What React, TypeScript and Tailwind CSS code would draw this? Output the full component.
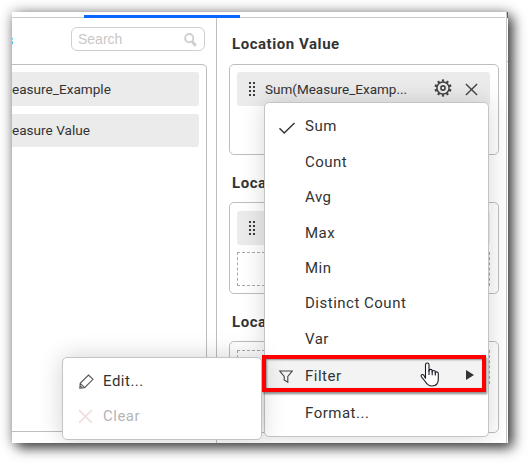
import type { ReactNode } from 'react';

function Grip() {
  return (
    <svg className="h-[15px] w-2 shrink-0" viewBox="0 0 8 15" fill="#3c3c3c" shapeRendering="crispEdges">
      {[1, 5].map((x) =>
        [0, 4, 8, 12].map((y) => <rect key={`${x}-${y}`} x={x} y={y} width="2" height="2" />),
      )}
    </svg>
  );
}

function Gear() {
  const teeth = [0, 36, 72, 108, 144, 180, 216, 252, 288, 324];
  return (
    <svg className="-mt-[2px] h-[18px] w-[18px] shrink-0" viewBox="0 0 18 18" fill="none" stroke="#444">
      <circle cx="9" cy="9" r="6.1" strokeWidth="1.5" />
      <circle cx="9" cy="9" r="2.1" strokeWidth="1.6" />
      {teeth.map((a) => (
        <path key={a} d="M9 .4V2.8" strokeWidth="2.2" transform={`rotate(${a} 9 9)`} />
      ))}
    </svg>
  );
}

function Cross({ className }: { className: string }) {
  return (
    <svg className={className} viewBox="0 0 14 14" fill="none" stroke="currentColor" strokeWidth="1.5">
      <path d="M1 1L13 13M13 1L1 13" />
    </svg>
  );
}

function Check() {
  return (
    <svg className="mt-[2px] ml-px h-3 w-4" viewBox="0 0 16 12" fill="none" stroke="#333" strokeWidth="1.4">
      <path d="M.5 6.2L5.2 11L15.5 1" />
    </svg>
  );
}

function Funnel() {
  return (
    <svg className="ml-px h-[13px] w-[14px]" viewBox="0 0 14 13" fill="none" stroke="#444" strokeWidth="1.1">
      <path d="M.8 1H13.2L8.8 6.4V12.2L5.2 10V6.4Z" />
    </svg>
  );
}

function Pencil() {
  return (
    <svg className="h-[15px] w-[15px]" viewBox="0 0 15 15" fill="none" stroke="#555" strokeWidth="1.1">
      <path d="M.8 14.2L1.2 9.3L9.5 1L14 5.3L5.6 13.7ZM1.2 9.3L5.6 13.7M1 11.7L3.2 14" />
    </svg>
  );
}

function DropZone({ children, className }: { children?: ReactNode; className: string }) {
  return <div className={`flex w-[270px] flex-col gap-[7px] rounded-[5px] border border-[#bdbdbd] pr-2 pl-[7px] ${className}`}>{children}</div>;
}

function MenuRow({ label, icon, className = 'h-[35.4px]' }: { label: string; icon?: ReactNode; className?: string }) {
  return (
    <div className={`flex items-center text-[15px] tracking-[0.5px] ${className}`}>
      <div className="flex w-10 shrink-0 items-center pl-[13px]">{icon}</div>
      {label}
    </div>
  );
}

function Heading({ children }: { children: ReactNode }) {
  return <h2 className="pl-[3px] text-[15px] leading-[18px] font-bold tracking-[0.55px]">{children}</h2>;
}

export default function App() {
  return (
    <div className="h-[463px] w-[528px] overflow-hidden bg-white pt-3 pl-3 font-['Roboto',sans-serif] text-[#333]">
      <div className="relative h-[431px] w-[496px] bg-white shadow-[5px_5px_12px_0px_rgba(0,0,0,0.7),0_0_12px_rgba(0,0,0,0.3)]">
        <div className="flex h-full w-full flex-col overflow-hidden">
          <div className="flex h-[6px] shrink-0 items-end">
            <div className="h-px w-[72px] bg-[#c8c8c8]" />
            <div className="h-[3px] w-[156px] bg-[#0a66ff]" />
            <div className="h-px w-[265px] bg-[#c8c8c8]" />
            <div className="h-full w-[1px] bg-white" />
            <div className="h-full w-px bg-[#c8c8c8]" />
            <div className="h-full w-px bg-[#0a66ff]" />
          </div>
          <div className="flex min-h-0 flex-1">
            <div className="flex w-[205px] shrink-0 flex-col border-r border-[#bdbdbd]">
              <div className="flex h-[46px] shrink-0 items-center justify-between pt-[10px] pr-[11px] pb-3">
                <div className="h-4 w-px overflow-hidden text-[15px] leading-4 text-[#55b4f5]">
                  <span className="-ml-[6px]">s</span>
                </div>
                <div className="-mt-[2px] flex h-6 w-[134px] items-center justify-between rounded-[6px] border border-[#cfcfcf] pr-[7px] pl-[6px]">
                  <span className="font-['Liberation_Sans',sans-serif] text-[14px] text-[#c8c8c8]">Search</span>
                  <svg className="mt-[2px] h-[14px] w-[13px]" viewBox="0 0 13 14" fill="none" stroke="#d0d0d0">
                    <circle cx="5.2" cy="5.2" r="4.1" strokeWidth="2" />
                    <path d="M8 8.4L11.8 12.8" strokeWidth="3" />
                  </svg>
                </div>
              </div>
              <div className="flex h-[368px] w-[195px] flex-col gap-2 rounded-r-[5px] border-y border-r border-[#bdbdbd] py-[7px] pr-[7px] text-[13.6px]">
                <div className="flex h-[34px] items-center rounded-r-[3px] bg-[#ebebeb]">easure_Example</div>
                <div className="flex h-[33px] items-center rounded-r-[3px] bg-[#ebebeb]">easure Value</div>
              </div>
            </div>
            <div className="w-[289px] shrink-0 pt-[17px] pl-3">
              <Heading>Location Value</Heading>
              <DropZone className="mt-[11px] h-[91px] pt-[7px]">
                <div className="flex h-[34px] shrink-0 items-center rounded-[3px] bg-[#ebebeb] pr-3 pl-[11px] text-[13.5px]">
                  <Grip />
                  <span className="ml-[9px] flex-1">Sum(Measure_Examp...</span>
                  <Gear />
                  <Cross className="ml-[13px] h-[13px] w-[13px] text-[#444]" />
                </div>
              </DropZone>
              <div className="mt-[19px]"><Heading>Location</Heading></div>
              <DropZone className="mt-[10px] h-[92px] pt-2">
                <div className="flex h-[34px] shrink-0 items-center rounded-[3px] bg-[#ebebeb] pl-[11px]"><Grip /></div>
                <div className="h-[34px] shrink-0 border border-dashed border-[#a8a8a8]" />
              </DropZone>
              <div className="mt-[19px]"><Heading>Location</Heading></div>
              <DropZone className="mt-[10px] h-[92px] pt-2">
                <div className="h-[34px] shrink-0 border border-dashed border-[#a8a8a8]" />
              </DropZone>
            </div>
            <div className="w-[2px] border-l border-[#c8c8c8] pt-[43px]">
              <div className="h-px bg-[#bdbdbd]" />
            </div>
          </div>
        </div>

        <div className="absolute inset-0 overflow-hidden">
          <div className="absolute top-[90px] left-[252px] h-[335px] w-[225px] rounded-[5px] border border-[#c4c4c4] bg-white pt-[6px] shadow-[0_0_24px_rgba(0,0,0,0.16)]">
            <MenuRow label="Sum" icon={<Check />} />
            <MenuRow label="Count" />
            <MenuRow label="Avg" />
            <MenuRow label="Max" />
            <MenuRow label="Min" />
            <MenuRow label="Distinct Count" />
            <MenuRow label="Var" />
            <div className="mt-px flex items-center bg-[#f3f3f3]">
              <MenuRow label="Filter" icon={<Funnel />} className="h-[37px] flex-1" />
              <svg className="mr-[14px] mb-[2px] h-[10px] w-2" viewBox="0 0 8 10" fill="#333"><path d="M0 0L8 5L0 10Z" /></svg>
            </div>
            <MenuRow label="Format..." className="h-[37px]" />
          </div>
          <div className="absolute top-[345px] left-[50px] h-[83px] w-[200px] rounded-[5px] border border-[#c4c4c4] bg-white pt-[6px] shadow-[0_0_24px_rgba(0,0,0,0.18)]">
            <MenuRow label="Edit..." icon={<span className="pl-[3px]"><Pencil /></span>} />
            <MenuRow label="Clear" icon={<Cross className="ml-[2px] h-[15px] w-[15px] text-[#f1dddd]" />} className="h-[34px] text-[#b5b5b5]" />
          </div>
          <div className="absolute top-[343px] left-[250px] h-[37px] w-[224px] border-4 border-[#f00] shadow-[1px_2px_2px_rgba(0,0,0,0.4),inset_1px_1px_2px_rgba(0,0,0,0.4)]" />
          <svg className="absolute top-[350px] left-[408px] h-[25px] w-[20px]" viewBox="0 0 20 25" fill="#fff" stroke="#1b1b28" strokeWidth="1.1" strokeLinejoin="round">
            <path d="M5.5 16.3V2.7C5.5.4 9 .4 9 2.7V9C9 6.8 12.2 6.9 12.2 9V10C12.2 8 15.3 8 15.3 10V11C15.3 9.3 18.3 9.5 18.3 11.5V17.3C18.3 21.8 15.7 24 12 24C8.5 24 7 22.6 5.2 19.5L1.5 14.8C.4 13.1 2.5 11.6 3.8 13.2Z" />
            <path d="M9 8V13M12.2 9V13.3M15.3 10V13.5" fill="none" />
          </svg>
        </div>
      </div>
    </div>
  );
}
